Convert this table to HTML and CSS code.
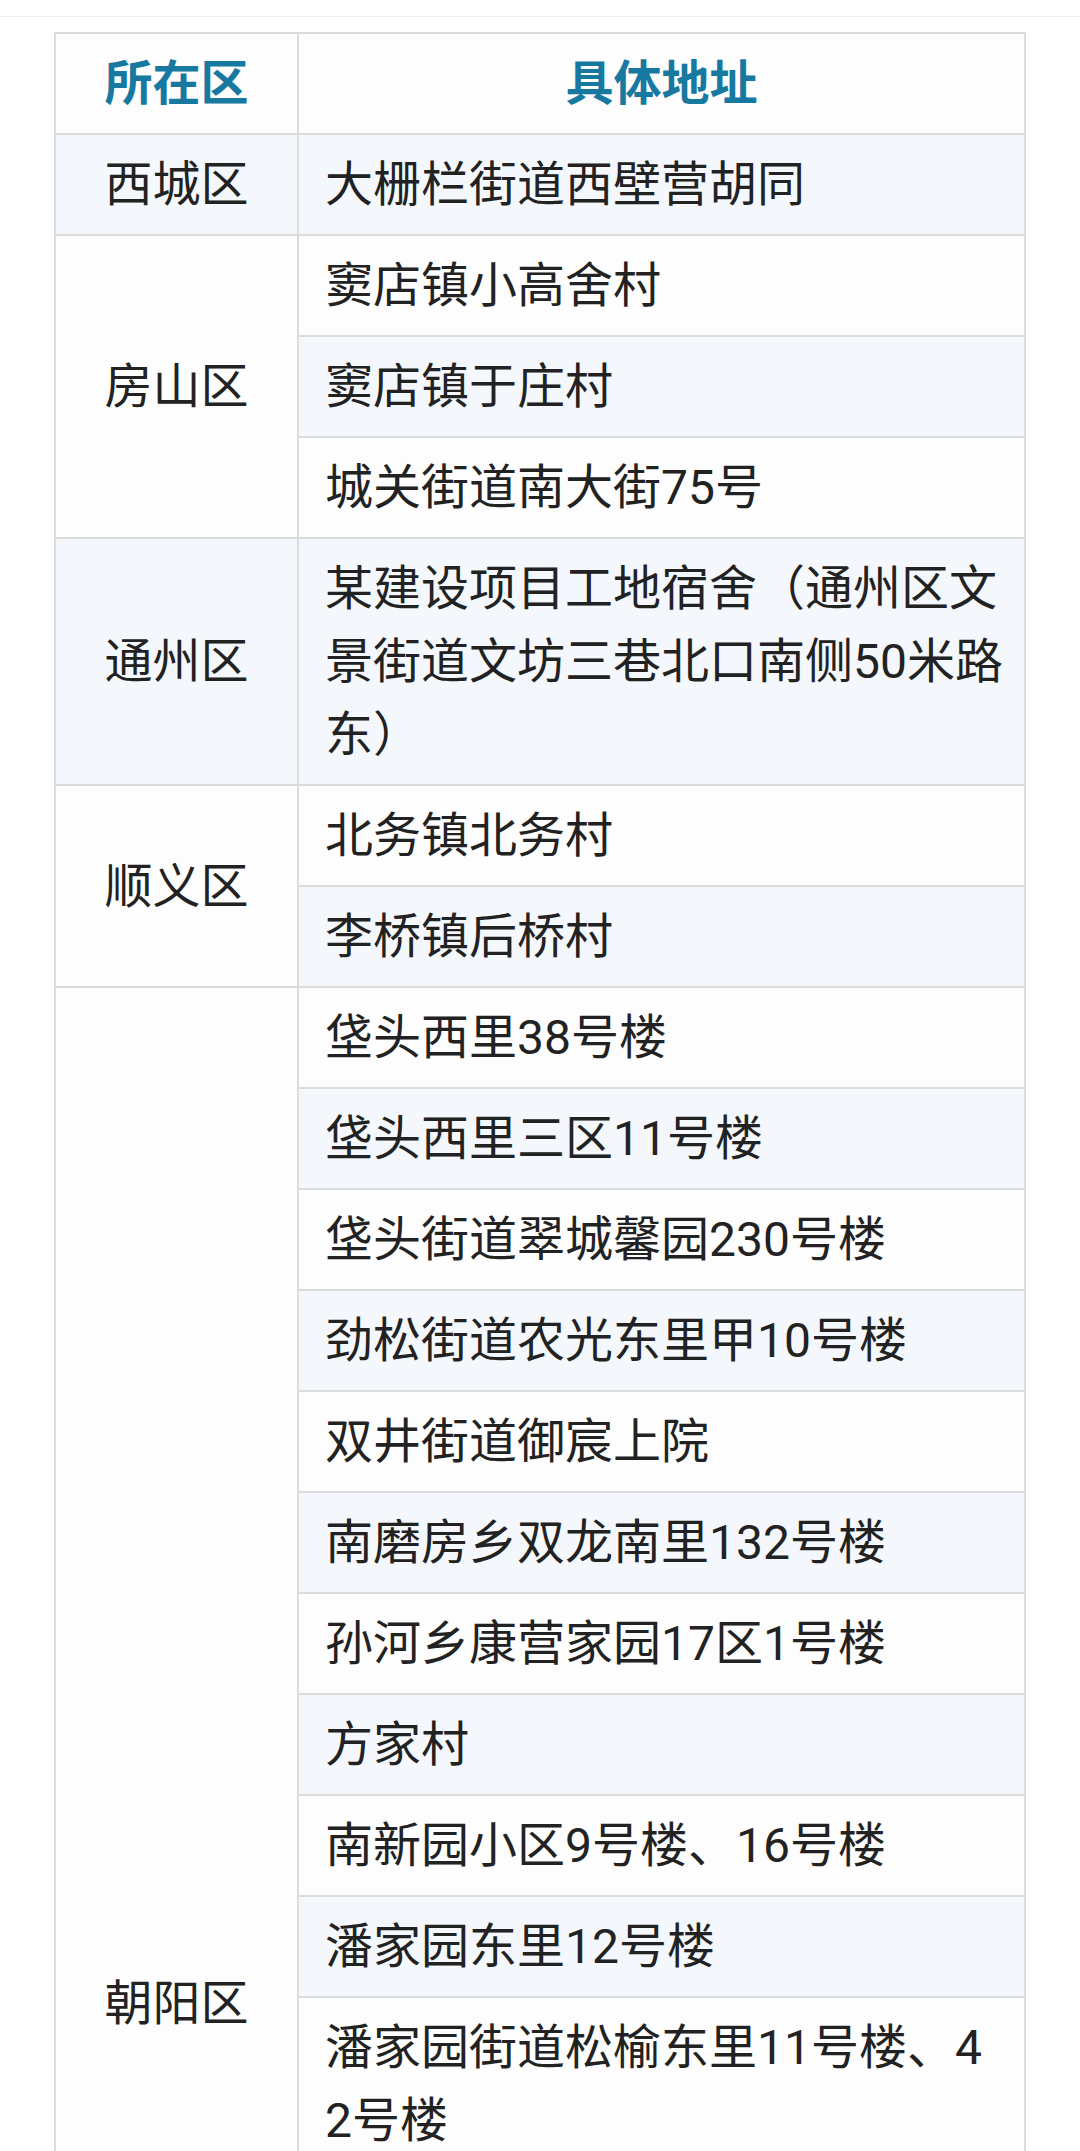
FILE: index.html
```html
<!DOCTYPE html>
<html lang="zh-CN">
<head>
<meta charset="utf-8">
<title>地址列表</title>
<link rel="stylesheet" href="styles.css">
</head>
<body>
<div class="topline"></div>
<main class="page">
  <table class="addr">
    <colgroup>
      <col class="col-area">
      <col class="col-addr">
    </colgroup>
    <thead>
      <tr>
        <th>所在区</th>
        <th>具体地址</th>
      </tr>
    </thead>
    <tbody>
      <tr><td class="area">西城区</td><td>大栅栏街道西壁营胡同</td></tr>
      <tr><td class="area" rowspan="3">房山区</td><td>窦店镇小高舍村</td></tr>
      <tr><td>窦店镇于庄村</td></tr>
      <tr><td>城关街道南大街75号</td></tr>
      <tr><td class="area">通州区</td><td>某建设项目工地宿舍（通州区文景街道文坊三巷北口南侧50米路东）</td></tr>
      <tr><td class="area" rowspan="2">顺义区</td><td>北务镇北务村</td></tr>
      <tr><td>李桥镇后桥村</td></tr>
      <tr><td class="area" rowspan="11">朝阳区</td><td>垡头西里38号楼</td></tr>
      <tr><td>垡头西里三区11号楼</td></tr>
      <tr><td>垡头街道翠城馨园230号楼</td></tr>
      <tr><td>劲松街道农光东里甲10号楼</td></tr>
      <tr><td>双井街道御宸上院</td></tr>
      <tr><td>南磨房乡双龙南里132号楼</td></tr>
      <tr><td>孙河乡康营家园17区1号楼</td></tr>
      <tr><td>方家村</td></tr>
      <tr><td>南新园小区9号楼、16号楼</td></tr>
      <tr><td>潘家园东里12号楼</td></tr>
      <tr class="continues"><td>潘家园街道松榆东里11号楼、42号楼</td></tr>
    </tbody>
  </table>
</main>
</body>
</html>
```

FILE: styles.css
```css
html, body {
  margin: 0;
  padding: 0;
  background: #ffffff;
}

body {
  font-family: Roboto, "Noto Sans CJK SC", "Noto Sans", sans-serif;
  color: #222222;
}

.topline {
  height: 16px;
  border-bottom: 1px solid #f0f0f0;
}

.page {
  padding: 15px 54px 0;
}

.addr {
  width: 972px;
  table-layout: fixed;
  border-collapse: separate;
  border-spacing: 0;
  border-top: 2px solid #dcdcdc;
  border-left: 2px solid #dcdcdc;
  font-size: 48px;
  line-height: 73px;
}

.col-area {
  width: 243px;
}

.col-addr {
  width: 727px;
}

.addr th,
.addr td {
  border-right: 2px solid #dcdcdc;
  border-bottom: 2px solid #dcdcdc;
  padding: 13px 19px 13px 26px;
  vertical-align: middle;
  text-align: left;
  background: #fdfdfd;
  font-weight: 400;
  word-break: break-all;
}

.addr th {
  text-align: center;
  font-weight: 700;
  color: #17799f;
  padding-left: 0;
  padding-right: 0;
}

.addr td.area {
  text-align: center;
  padding-left: 0;
  padding-right: 0;
}

.addr tbody tr:nth-child(odd) td {
  background: #f4f8fc;
}

.addr tr.continues td {
  padding-bottom: 862px;
  vertical-align: top;
}
```
